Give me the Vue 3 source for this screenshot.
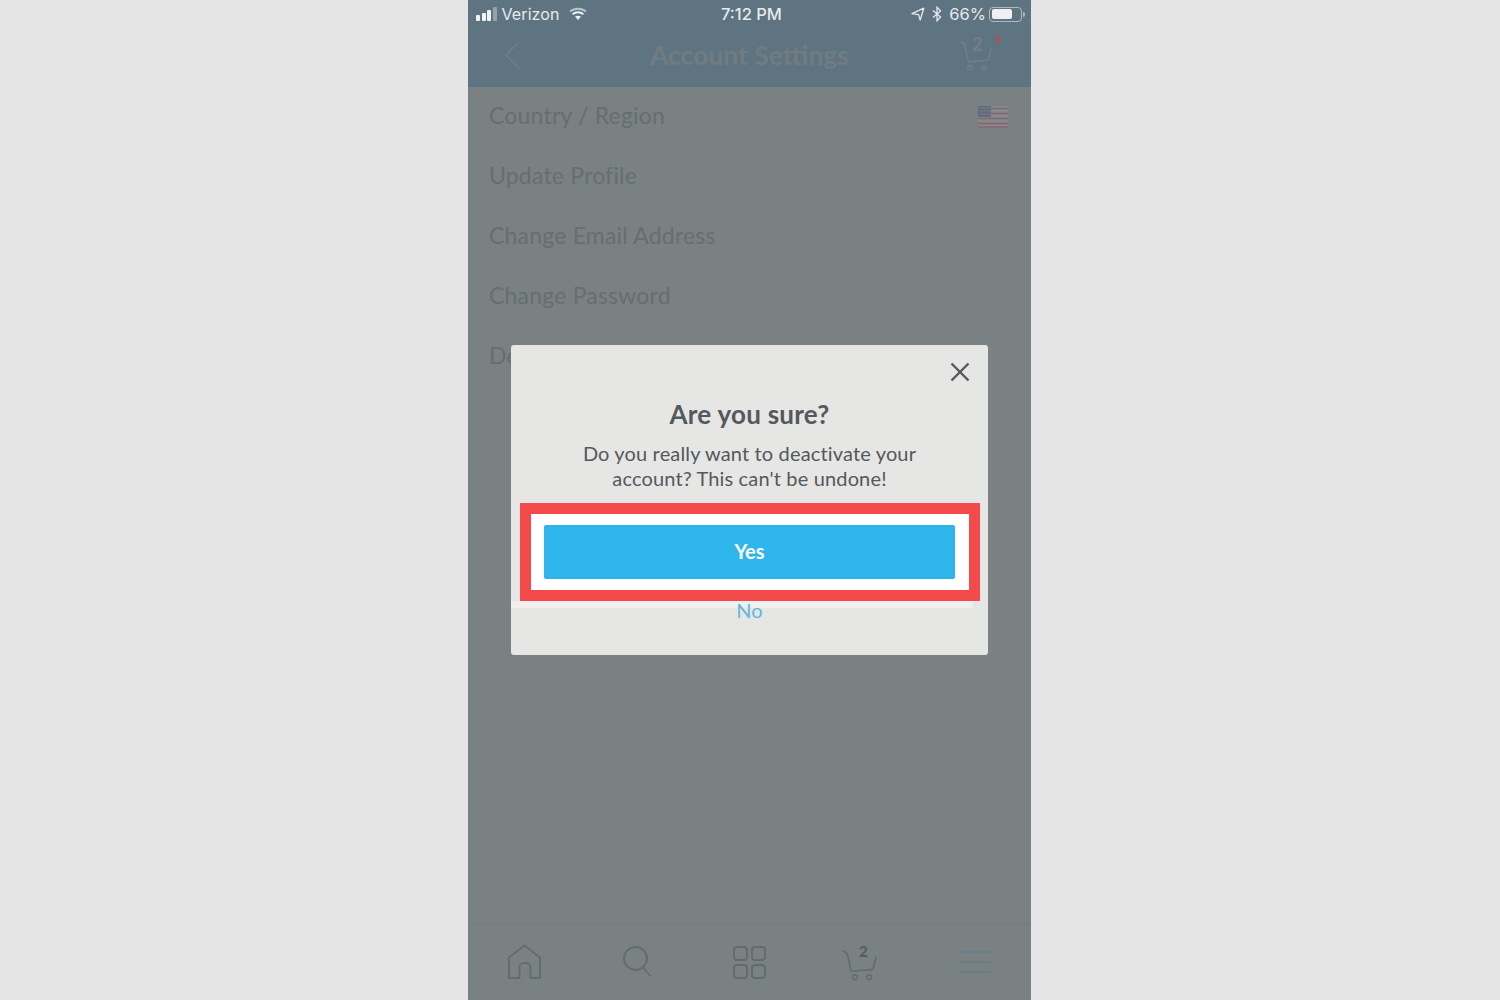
<script setup>
const rows = ['Country / Region', 'Update Profile', 'Change Email Address', 'Change Password', 'Deactivate Account']
</script>

<template>
  <div class="page">
    <div class="phone">
      <header class="top">
        <div class="status">
          <div class="status-left">
            <div class="signal"><i></i><i></i><i></i><i class="off"></i></div>
            <span class="carrier">Verizon</span>
            <svg class="wifi" width="18" height="14" viewBox="0 0 18 14">
              <path d="M1 4.600C5.500.7 12.500.7 17 4.600" fill="none" stroke="#b9c3c8" stroke-width="2" />
              <path d="M3.600 7.300c3.100-2.600 7.700-2.600 10.800 0" fill="none" stroke="#eef1f2" stroke-width="2" />
              <path d="M6 9.600c1.800-1.300 4.200-1.300 6 0L9 13z" fill="#eef1f2" />
            </svg>
          </div>
          <span class="time">7:12 PM</span>
          <div class="status-right">
            <svg width="14" height="14" viewBox="0 0 14 14">
              <path d="M1 6.600 12.800 1.200 9.200 13 7.600 7.600z" fill="none" stroke="#e4e8ea" stroke-width="1.300" stroke-linejoin="round" />
            </svg>
            <svg class="bt" width="10" height="16" viewBox="0 0 10 16">
              <path d="M1 4.400 8.600 11 5 14.800V1.200L8.600 5 1 11.600" fill="none" stroke="#e4e8ea" stroke-width="1.300" />
            </svg>
            <span class="battery-text">66%</span>
            <div class="battery"><div class="level"></div></div>
            <div class="nub"></div>
          </div>
        </div>
        <div class="nav">
          <svg width="18" height="30" viewBox="0 0 18 30">
            <path d="M16 2 3 15l13 13" fill="none" stroke="#6f7f87" stroke-width="1.600" />
          </svg>
          <h1>Account Settings</h1>
          <div class="cart-top">
            <svg width="36" height="32" viewBox="0 0 36 32">
              <path d="M2 1c3 .5 3.500 2 4 4l3 14c.2 1.200 1 1.700 2 1.600l17-1.200c1.200-.1 1.700-.8 2-2L32 8" fill="none" stroke="#737f85" stroke-width="1.600" stroke-linecap="round" />
              <circle cx="11" cy="26.500" r="2.200" fill="none" stroke="#737f85" stroke-width="1.400" />
              <circle cx="25" cy="26.500" r="2.200" fill="none" stroke="#737f85" stroke-width="1.400" />
            </svg>
            <span class="count">2</span>
            <span class="dot"></span>
          </div>
        </div>
      </header>

      <main class="list">
        <div v-for="row in rows" :key="row" class="row">
          <span>{{ row }}</span>
          <svg v-if="row === 'Country / Region'" class="flag" width="30" height="22" viewBox="0 0 30 22">
            <rect width="30" height="22" fill="#868a8d" />
            <path d="M0 2.500h30M0 7.500h30M0 12.500h30M0 17.500h30M0 21h30" stroke="#85666f" stroke-width="1.700" />
            <rect width="13" height="11" fill="#5f6b7a" />
            <path d="M1.500 2h11M1.500 5h11M1.500 8h11" stroke="#8a929c" stroke-width="1" stroke-dasharray="1 1" />
          </svg>
        </div>
      </main>

      <footer class="tabs">
        <svg width="36" height="36" viewBox="0 0 36 36">
          <path d="M2 34V13.500L17.500 1.500 33 13.500V34H23.500V23c0-5.500-11-5.500-11 0v11z" fill="none" stroke="#626b6d" stroke-width="1.800" stroke-linejoin="round" />
        </svg>
        <svg width="34" height="36" viewBox="0 0 34 36">
          <circle cx="13.500" cy="13.500" r="11.500" fill="none" stroke="#626b6d" stroke-width="1.800" />
          <path d="M21.500 23 29 31.500" fill="none" stroke="#626b6d" stroke-width="1.800" />
        </svg>
        <div class="grid-icon"><i></i><i></i><i></i><i></i></div>
        <div class="cart-bottom">
          <svg width="38" height="33" viewBox="0 0 36 32">
            <path d="M1 1c3 .8 4.500 2 5 4l3 14c.3 1.300 1 1.700 2 1.600l18-1.600c1.300-.1 1.700-.8 2-2L33.500 7" fill="none" stroke="#626b6d" stroke-width="1.600" stroke-linecap="round" />
            <circle cx="13" cy="26.500" r="2.300" fill="none" stroke="#626b6d" stroke-width="1.400" />
            <circle cx="27" cy="26.500" r="2.300" fill="none" stroke="#626b6d" stroke-width="1.400" />
          </svg>
          <span class="count-bottom">2</span>
        </div>
        <div class="menu"><i></i><i></i><i></i></div>
      </footer>

      <div class="dialog">
        <svg class="close" width="20" height="20" viewBox="0 0 20 20">
          <path d="M1.500 1.500 18.500 18.500M18.500 1.500 1.500 18.500" fill="none" stroke="#53595c" stroke-width="2.400" />
        </svg>
        <h2>Are you sure?</h2>
        <p>Do you really want to deactivate your<br />account? This can't be undone!</p>
        <div class="highlight">
          <button class="yes">Yes</button>
        </div>
        <div class="strip"></div>
        <a class="no">No</a>
      </div>
    </div>
  </div>
</template>

<style scoped>
.page {
  width: 1500px;
  height: 1000px;
  background: #e5e5e5;
  display: flex;
  justify-content: center;
  padding-right: 1px;
  box-sizing: border-box;
  font-family: "Lato", "Open Sans", sans-serif;
  overflow: hidden;
}

.phone {
  position: relative;
  width: 563px;
  height: 1000px;
  background: #7a8182;
  display: flex;
  flex-direction: column;
}

.top {
  height: 87px;
  background: #5e7480;
}

.status {
  height: 28px;
  padding: 0 8px;
  display: flex;
  align-items: center;
  justify-content: space-between;
  position: relative;
  color: #e8ebec;
  font-family: "Inter", "Liberation Sans", sans-serif;
  font-size: 16px;
}

.status-left,
.status-right {
  display: flex;
  align-items: center;
}

.signal {
  display: flex;
  align-items: flex-end;
  gap: 1.500px;
  height: 14px;
}

.signal i {
  width: 4px;
  background: #f0f2f3;
  border-radius: 1px;
}

.signal i:nth-child(1) { height: 6px; }
.signal i:nth-child(2) { height: 8px; }
.signal i:nth-child(3) { height: 11px; }
.signal i:nth-child(4) { height: 14px; }

.signal .off {
  background: #93a3ab;
}

.carrier {
  margin-left: 5px;
  letter-spacing: 0.1px;
}

.wifi {
  margin-left: 9px;
}

.time {
  position: absolute;
  left: 253px;
  font-size: 16.500px;
  font-weight: 500;
}

.status-right {
  gap: 7px;
  margin-right: -2px;
}

.battery-text {
  margin-right: -4px;
  font-size: 16.500px;
}

.battery {
  width: 33px;
  height: 15px;
  border: 1px solid #aeb9be;
  border-radius: 4px;
  padding: 1.500px;
  box-sizing: border-box;
  margin-right: -6px;
}

.level {
  width: 20px;
  height: 100%;
  background: #eef0f1;
  border-radius: 2px;
}

.nub {
  width: 2px;
  height: 5px;
  background: #aeb9be;
  border-radius: 0 2px 2px 0;
}

.nav {
  height: 59px;
  padding: 0 36px 5px 35px;
  display: flex;
  align-items: center;
  justify-content: space-between;
  box-sizing: border-box;
}

h1 {
  margin: 0 0 0 19px;
  font-size: 26.500px;
  font-weight: 700;
  color: #717c80;
}

.cart-top {
  position: relative;
  width: 36px;
  height: 32px;
  margin-top: 4px;
}

.cart-top svg,
.cart-bottom svg {
  display: block;
}

.count {
  position: absolute;
  left: 13px;
  top: -8px;
  font-size: 18px;
  font-weight: 700;
  color: #737f85;
}

.dot {
  position: absolute;
  left: 35px;
  top: -6px;
  width: 8px;
  height: 8px;
  border-radius: 50%;
  background: #85626a;
}

.list {
  flex: 1;
  padding-left: 21px;
  padding-right: 23px;
}

.row {
  height: 60px;
  display: flex;
  align-items: center;
  justify-content: space-between;
  font-size: 23px;
  color: #666e6f;
  letter-spacing: 0.2px;
}

.row span {
  margin-bottom: 4px;
}

.tabs {
  height: 76px;
  border-top: 1px solid #747b7c;
  padding: 19px 0 0 39px;
  display: flex;
  align-items: flex-start;
  box-sizing: border-box;
}

.tabs > svg:nth-child(2) {
  margin-left: 79px;
  margin-top: 1px;
}

.grid-icon {
  margin-left: 77px;
  margin-top: 2px;
  width: 33px;
  display: grid;
  grid-template-columns: 15px 15px;
  gap: 3px;
}

.grid-icon i {
  height: 11px;
  width: 11px;
  border: 2px solid #626b6d;
  border-radius: 4px;
}

.cart-bottom {
  position: relative;
  margin-left: 75px;
  margin-top: 6px;
  width: 38px;
  height: 32px;
}

.count-bottom {
  position: absolute;
  left: 18px;
  top: -8px;
  font-size: 15px;
  font-weight: 900;
  color: #565e61;
}

.menu {
  margin-left: 80px;
  margin-top: 7px;
  width: 32px;
  display: flex;
  flex-direction: column;
  gap: 8px;
}

.menu i {
  height: 2px;
  background: #647f8a;
}

.dialog {
  position: absolute;
  left: 43px;
  top: 345px;
  width: 477px;
  height: 310px;
  background: #e6e6e5;
  border-radius: 3px;
  box-sizing: border-box;
  padding-top: 54px;
  text-align: center;
  color: #53595c;
}

.close {
  position: absolute;
  right: 18px;
  top: 17px;
}

h2 {
  margin: 0;
  font-size: 26px;
  line-height: 30px;
  font-weight: 700;
  letter-spacing: 0.25px;
}

p {
  margin: 12px 0 0;
  font-size: 20px;
  line-height: 25px;
  letter-spacing: 0.15px;
}

.highlight {
  margin: 12px 8px 0 9px;
  border: 11px solid #f44a4c;
  background: #fff;
  padding: 11px 14px 11px 13px;
  height: 98px;
  box-sizing: border-box;
}

.yes {
  display: block;
  width: 100%;
  height: 54px;
  border: 0;
  border-radius: 2px;
  padding: 0 0 3px;
  background: #2eb5ec;
  color: #fff;
  font-family: inherit;
  font-size: 20px;
  font-weight: 700;
}

.strip {
  height: 7px;
  margin: 0 15px 0 0;
  background: #efefee;
}

.no {
  display: block;
  margin-top: -9px;
  font-size: 20px;
  line-height: 22px;
  color: #62b7de;
  position: relative;
}
</style>

<style>
body {
  margin: 0;
}
</style>
